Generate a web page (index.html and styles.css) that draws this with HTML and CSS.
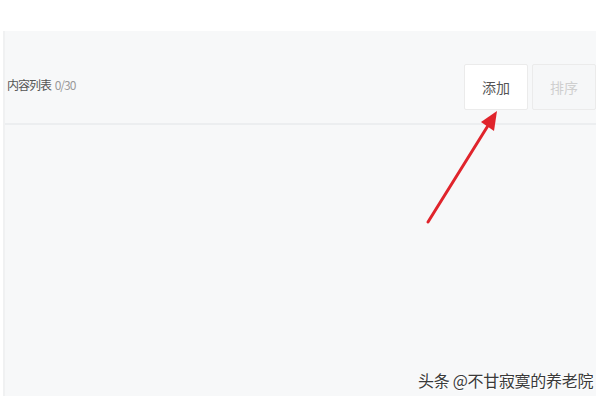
FILE: index.html
```html
<!DOCTYPE html>
<html>
<head>
    <meta name="viewport" content="width=device-width, initial-scale=1">
    <title>内容列表</title>
    <link rel="stylesheet" href="styles.css">
</head>
<body>
<div class="top-strip"></div>

<div class="panel">
    <div class="panel-head">
        <div class="list-title">内容列表 <span class="count">0/30</span></div>
        <div class="actions">
            <button class="btn">添加</button>
            <button class="btn btn-disabled">排序</button>
        </div>
    </div>
    <div class="panel-body"></div>

    <!-- red pointer arrow -->
    <svg class="arrow" width="600" height="400" viewBox="0 0 600 400">
        <line x1="428" y1="222" x2="489" y2="124" stroke="#e0242c" stroke-width="3" stroke-linecap="round"/>
        <polygon points="497,111 481,122 494,131" fill="#e0242c"/>
    </svg>

    <div class="watermark">头条 @不甘寂寞的养老院</div>
</div>
<div class="bottom-strip"></div>
</body>
</html>
```

FILE: styles.css
```css
html, body {
    margin: 0;
    padding: 0;
    overflow: hidden;
}

body {
    width: 600px;
    height: 400px;
    background-color: #ffffff;
    font-family: "Noto Sans CJK SC", "Liberation Sans", sans-serif;
    position: relative;
}

.top-strip {
    height: 31px;
}

.panel {
    height: 365px;
    margin: 0 4px 0 3px;
    background-color: #f7f8f9;
    border-left: 2px solid #f0f1f2;
}

.panel-head {
    height: 92px;
    display: flex;
    align-items: center;
    justify-content: space-between;
    border-bottom: 2px solid #eceef0;
}

.list-title {
    padding-left: 2px;
    padding-top: 14px;
    font-size: 12px;
    color: #555555;
    letter-spacing: -1px;
}

.count {
    color: #9a9a9a;
    margin-left: 2px;
}

.actions {
    display: flex;
    gap: 4px;
    padding-top: 20px;
}

.btn {
    width: 64px;
    height: 46px;
    background-color: #ffffff;
    border: 1px solid #ebebeb;
    border-radius: 2px;
    font-family: "Noto Sans CJK SC", sans-serif;
    font-size: 14px;
    color: #555555;
    padding: 0;
}

.btn-disabled {
    background-color: #f6f7f8;
    color: #cfcfcf;
}

.arrow {
    position: absolute;
    left: 0;
    top: 0;
    pointer-events: none;
}

.watermark {
    position: absolute;
    left: 418px;
    top: 368px;
    font-size: 16px;
    color: #3a3a3a;
    text-shadow: 0 0 2px #ffffff, 1px 1px 1px #ffffff;
    letter-spacing: -0.3px;
}

.bottom-strip {
    height: 4px;
}
```
